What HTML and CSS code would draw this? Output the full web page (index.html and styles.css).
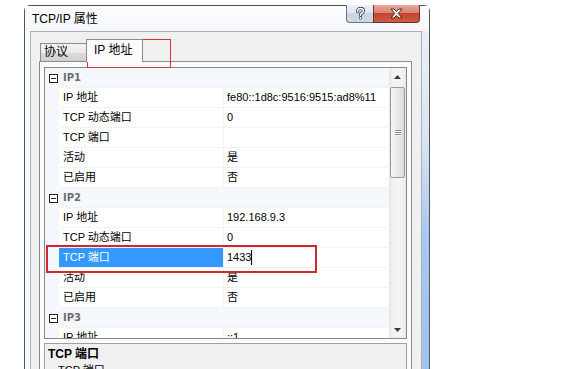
FILE: index.html
```html
<!DOCTYPE html>
<html>
<head>
<meta charset="utf-8">
<link rel="stylesheet" href="styles.css">
</head>
<body>
<div class="window">
  <div class="titlebar">
    <span class="title">TCP/IP 属性</span>
    <div class="caption">
      <div class="cbtn help">
        <svg width="13" height="13" viewBox="0 0 13 13">
          <path d="M3.6 4.4 C3.6 2.4 5 1.4 6.5 1.4 C8.2 1.4 9.5 2.4 9.5 4 C9.5 5.6 7.4 6 6.5 7.2 L6.5 8.3" fill="none" stroke="#3b4756" stroke-width="3.2" stroke-linecap="round"/>
          <circle cx="6.5" cy="11" r="1.6" fill="#3b4756"/>
          <path d="M3.6 4.4 C3.6 2.4 5 1.4 6.5 1.4 C8.2 1.4 9.5 2.4 9.5 4 C9.5 5.6 7.4 6 6.5 7.2 L6.5 8.3" fill="none" stroke="#fff" stroke-width="1.5" stroke-linecap="round"/>
          <circle cx="6.5" cy="11" r="0.9" fill="#fff"/>
        </svg>
      </div>
      <div class="cbtn close">
        <svg width="13" height="11" viewBox="0 0 13 11">
          <path d="M1 1 L4 1 L6.5 3.6 L9 1 L12 1 L8.2 5.5 L12 10 L9 10 L6.5 7.4 L4 10 L1 10 L4.8 5.5 Z" fill="#fff" stroke="#4a2420" stroke-width="1" stroke-linejoin="round"/>
        </svg>
      </div>
    </div>
  </div>
  <div class="client">
    <div class="tabs">
      <div class="tab">协议</div>
      <div class="tab active">IP 地址</div>
    </div>
    <div class="tabpage">
      <div class="grid">
        <div class="rows">
          <div class="row cat"><span class="gut"><svg width="9" height="9" viewBox="0 0 9 9"><rect x="0.5" y="0.5" width="8" height="8" fill="#fff" stroke="#222"/><path d="M2 4.5 H7" stroke="#222"/></svg></span><span class="name">IP1</span></div>
          <div class="row"><span class="gut"></span><span class="name">IP 地址</span><span class="val">fe80::1d8c:9516:9515:ad8%11</span></div>
          <div class="row"><span class="gut"></span><span class="name">TCP 动态端口</span><span class="val">0</span></div>
          <div class="row"><span class="gut"></span><span class="name">TCP 端口</span><span class="val"></span></div>
          <div class="row"><span class="gut"></span><span class="name">活动</span><span class="val">是</span></div>
          <div class="row"><span class="gut"></span><span class="name">已启用</span><span class="val">否</span></div>
          <div class="row cat"><span class="gut"><svg width="9" height="9" viewBox="0 0 9 9"><rect x="0.5" y="0.5" width="8" height="8" fill="#fff" stroke="#222"/><path d="M2 4.5 H7" stroke="#222"/></svg></span><span class="name">IP2</span></div>
          <div class="row"><span class="gut"></span><span class="name">IP 地址</span><span class="val">192.168.9.3</span></div>
          <div class="row"><span class="gut"></span><span class="name">TCP 动态端口</span><span class="val">0</span></div>
          <div class="row selected"><span class="gut"></span><span class="name">TCP 端口</span><span class="val"><span class="edit">1433</span><span class="caret"></span></span></div>
          <div class="row"><span class="gut"></span><span class="name">活动</span><span class="val">是</span></div>
          <div class="row"><span class="gut"></span><span class="name">已启用</span><span class="val">否</span></div>
          <div class="row cat"><span class="gut"><svg width="9" height="9" viewBox="0 0 9 9"><rect x="0.5" y="0.5" width="8" height="8" fill="#fff" stroke="#222"/><path d="M2 4.5 H7" stroke="#222"/></svg></span><span class="name">IP3</span></div>
          <div class="row"><span class="gut"></span><span class="name">IP 地址</span><span class="val">::1</span></div>
        </div>
        <div class="scrollbar">
          <div class="sb-btn"><svg width="7" height="4" viewBox="0 0 7 4"><path d="M0 4 L3.5 0 L7 4 Z" fill="#3a3a3a"/></svg></div>
          <div class="thumb"><span class="grip"></span><span class="grip"></span><span class="grip"></span></div>
          <div class="track"></div>
          <div class="sb-btn"><svg width="7" height="4" viewBox="0 0 7 4"><path d="M0 0 L7 0 L3.5 4 Z" fill="#3a3a3a"/></svg></div>
        </div>
      </div>
      <div class="desc">
        <div class="desc-title">TCP 端口</div>
        <div class="desc-text">TCP 端口</div>
      </div>
    </div>
  </div>
  <div class="mark mark-tab"></div>
  <div class="mark mark-row"></div>
</div>
</body>
</html>
```

FILE: styles.css
```css
html, body {
  margin: 0;
  padding: 0;
  background: #ffffff;
  overflow: hidden;
  width: 580px;
  height: 369px;
}

.window {
  position: relative;
  box-sizing: border-box;
  margin: 5px 0 0 24px;
  width: 406px;
  height: 380px;
  border: 1px solid #4d5560;
  border-radius: 6px 6px 0 0;
  background:
    linear-gradient(to bottom, #eef2f6 0%, #dbe5f0 35%, #a9c8ec 60%, #9fc2ea 100%) right top / 7px 100% no-repeat,
    linear-gradient(to bottom, #fbfcfd 0%, #f5f7f9 100%);
  font-family: "Liberation Sans", "Noto Sans CJK SC", sans-serif;
}

.titlebar {
  display: flex;
  align-items: flex-start;
  height: 25px;
  padding: 0 9px 0 7px;
  background: linear-gradient(to bottom, #fbfcfd 0%, #f5f7f9 100%);
}

.title {
  font-size: 12px;
  line-height: 27px;
  color: #000;
}

.caption {
  display: flex;
  margin-left: auto;
  margin-top: -1px;
}

.cbtn {
  height: 18px;
  box-sizing: border-box;
  display: flex;
  align-items: center;
  justify-content: center;
  border: 1px solid #6b7684;
  border-top: none;
}

.help {
  width: 27px;
  border-radius: 0 0 0 4px;
  border-right: none;
  background: linear-gradient(to bottom, #edf1f5 0%, #dde5ee 45%, #c6d2df 50%, #cfdae6 100%);
}

.close {
  width: 47px;
  border-color: #5d3530;
  border-radius: 0 0 4px 0;
  background: linear-gradient(to bottom, #e9a99c 0%, #dc8372 45%, #c4432f 50%, #cf5d44 100%);
}

.client {
  box-sizing: border-box;
  margin: 0 7px 0 5px;
  height: 360px;
  border: 1px solid #a5b1be;
  background: #f0f0f0;
}

.tabs {
  display: flex;
  align-items: flex-end;
  height: 22px;
  padding: 7px 0 0 9px;
  font-size: 12px;
  position: relative;
  z-index: 1;
}

.tab {
  box-sizing: border-box;
  height: 18px;
  width: 47px;
  padding-left: 3px;
  line-height: 17px;
  border: 1px solid #898c95;
  border-bottom: none;
  background: linear-gradient(to bottom, #f3f3f3 0%, #ebebeb 50%, #dddddd 51%, #cfcfcf 100%);
  color: #000;
}

.tab.active {
  height: 23px;
  width: 57px;
  margin-left: -1px;
  margin-bottom: -1px;
  padding-left: 7px;
  line-height: 21px;
  background: #fcfcfc;
}

.tabpage {
  box-sizing: border-box;
  margin: 0 9px 0 8px;
  padding: 5px 4px 0 4px;
  height: 320px;
  border: 1px solid #898c95;
  background: #fbfbfb;
}

.grid {
  box-sizing: border-box;
  height: 272px;
  border: 1px solid #828790;
  display: flex;
  background: #fff;
}

.rows {
  flex: 1;
  overflow: hidden;
  font-size: 11px;
}

.row {
  display: flex;
  height: 20px;
}

.gut {
  width: 14px;
  flex: none;
  background: #f4f7fc;
  display: flex;
  align-items: center;
  justify-content: center;
  padding-left: 2px;
  box-sizing: border-box;
}

.name {
  box-sizing: border-box;
  width: 165px;
  flex: none;
  padding-left: 4px;
  line-height: 19px;
  border-right: 1px solid #f0f2f5;
  border-bottom: 1px solid #f0f2f5;
  color: #000;
  white-space: nowrap;
}

.val {
  box-sizing: border-box;
  flex: 1;
  padding-left: 3px;
  line-height: 19px;
  border-bottom: 1px solid #f0f2f5;
  white-space: nowrap;
  display: flex;
  align-items: center;
}

.row.cat .name {
  flex: 1;
  width: auto;
  border-right: none;
  background: #f4f7fc;
  font-weight: bold;
  color: #6d6d6d;
  font-family: "DejaVu Sans", "Noto Sans CJK SC", sans-serif;
  font-size: 10px;
  line-height: 20px;
}

.row.selected .name {
  background: #3399ff;
  color: #fff;
}

.caret {
  width: 1px;
  height: 15px;
  background: #000;
}

.scrollbar {
  width: 17px;
  flex: none;
  display: flex;
  flex-direction: column;
  background: linear-gradient(to right, #e6e6e6 0%, #f3f3f3 25%, #f3f3f3 75%, #e9e9e9 100%);
}

.sb-btn {
  height: 17px;
  flex: none;
  display: flex;
  align-items: center;
  justify-content: center;
}

.thumb {
  box-sizing: border-box;
  height: 91px;
  margin: 2px 1px 0 1px;
  border: 1px solid #9a9a9a;
  border-radius: 2px;
  background: linear-gradient(to right, #f4f4f4 0%, #e9e9e9 50%, #dadada 100%);
  display: flex;
  flex-direction: column;
  align-items: center;
  justify-content: center;
  gap: 1px;
}

.grip {
  width: 6px;
  height: 1px;
  background: #8a8a8a;
  box-shadow: 0 1px 0 #f8f8f8;
}

.track {
  flex: 1;
}

.desc {
  box-sizing: border-box;
  margin-top: 4px;
  height: 40px;
  border: 1px solid #a0a0a0;
  background: #f0f0f0;
  padding: 3px 3px;
}

.desc-title {
  font-weight: bold;
  font-size: 12px;
  line-height: 15px;
}

.desc-text {
  font-size: 11px;
  line-height: 16px;
  padding-left: 10px;
  color: #000;
}

.mark {
  position: absolute;
  pointer-events: none;
}

.mark-tab {
  left: 62px;
  top: 33px;
  width: 82px;
  height: 27px;
  border: 1px solid #d2343b;
}

.mark-row {
  left: 21px;
  top: 239px;
  width: 267px;
  height: 24px;
  border: 2px solid #d0282f;
}
```
